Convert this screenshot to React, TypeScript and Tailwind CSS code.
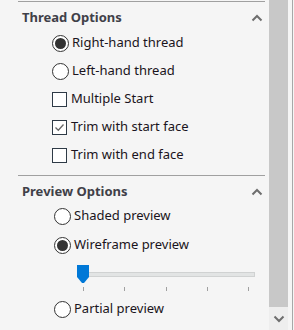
import { useState } from 'react'

function ChevronUp() {
  return (
    <svg width="12" height="8" viewBox="0 0 12 8" className="text-[#6e6e6e]">
      <path d="M1.5 6.5 L6 2 L10.5 6.5" fill="none" stroke="currentColor" strokeWidth="2" />
    </svg>
  )
}

function ChevronDown() {
  return (
    <svg width="12" height="8" viewBox="0 0 12 8" className="text-[#6e6e6e]">
      <path d="M1.5 1.5 L6 6 L10.5 1.5" fill="none" stroke="currentColor" strokeWidth="2" />
    </svg>
  )
}

function Radio({ checked, label }: { checked?: boolean; label: string }) {
  return (
    <div className="flex items-center gap-[3px]">
      <div className="w-[17px] h-[17px] rounded-full border border-[#333333] bg-white flex items-center justify-center">
        {checked && <div className="w-[11px] h-[11px] rounded-full bg-[#333333]" />}
      </div>
      <span>{label}</span>
    </div>
  )
}

function Check({ checked, label }: { checked?: boolean; label: string }) {
  return (
    <div className="flex items-center gap-[4px]">
      <div className="w-[15px] h-[15px] border border-[#2e3a46] bg-white flex items-center justify-center">
        {checked && (
          <svg width="11" height="11" viewBox="0 0 11 11">
            <path d="M1.5 5.5 L4.3 8.3 L9.5 2.5" fill="none" stroke="#666" strokeWidth="1.3" />
          </svg>
        )}
      </div>
      <span>{label}</span>
    </div>
  )
}

function Header({ title }: { title: string }) {
  return (
    <div className="h-[32px] flex items-center justify-between pl-[22px] pr-[6px]">
      <span className="font-bold text-[#404048]">{title}</span>
      <ChevronUp />
    </div>
  )
}

export default function App() {
  const [level] = useState(0)
  return (
    <div className="w-[294px] h-[330px] flex bg-[#f5f5f5] text-[13px] text-[#1a1420] font-['Noto_Sans',sans-serif] overflow-hidden">
      <div className="w-[269px] flex flex-col">
        <div className="ml-[18px] mr-[4px] mt-[1px] h-px bg-[#a0a0a0]" />
        <Header title="Thread Options" />
        <div className="pl-[52px] -mt-[5px] flex flex-col">
          <div className="h-[28px] flex items-center"><Radio checked label="Right-hand thread" /></div>
          <div className="h-[28px] flex items-center"><Radio label="Left-hand thread" /></div>
          <div className="h-[28px] flex items-center"><Check label="Multiple Start" /></div>
          <div className="h-[28px] flex items-center"><Check checked label="Trim with start face" /></div>
          <div className="h-[28px] flex items-center"><Check label="Trim with end face" /></div>
        </div>
        <div className="ml-[18px] mr-[4px] mt-[6px] h-px bg-[#a0a0a0]" />
        <Header title="Preview Options" />
        <div className="pl-[54px] -mt-[5px] flex flex-col">
          <div className="h-[26px] flex items-center"><Radio label="Shaded preview" /></div>
          <div className="h-[32px] flex items-center"><Radio checked label="Wireframe preview" /></div>
          <div className="relative mt-[4px] ml-[23px] w-[178px] h-[30px]">
            <div className="absolute left-0 right-0 top-[7px] h-[5px] bg-[#e2e4e4] border border-[#d0d2d2]" />
            <svg width="12" height="18" viewBox="0 0 12 18" className="absolute top-0" style={{ left: level }}>
              <path d="M0 0 H12 V12 L7 18 H5 L0 12 Z" fill="#0078d7" />
            </svg>
            <div className="absolute left-[6px] right-[6px] top-[22px] flex justify-between">
              {[0, 1, 2, 3, 4].map((i) => (
                <div key={i} className="w-px h-[4px] bg-[#a0a0a0]" />
              ))}
            </div>
          </div>
          <div className="h-[28px] flex items-center"><Radio label="Partial preview" /></div>
        </div>
      </div>
      <div className="w-[19px] flex flex-col">
        <div className="h-[307px] bg-[#c8c8c8]" />
        <div className="flex-1 bg-[#eeeeee] flex items-center justify-center">
          <ChevronDown />
        </div>
      </div>
      <div className="w-[6px] flex">
        <div className="w-[4px] bg-[#f5f5f5]" />
        <div className="w-px bg-[#a8a8a8]" />
        <div className="w-px bg-[#f5f5f5]" />
      </div>
    </div>
  )
}
